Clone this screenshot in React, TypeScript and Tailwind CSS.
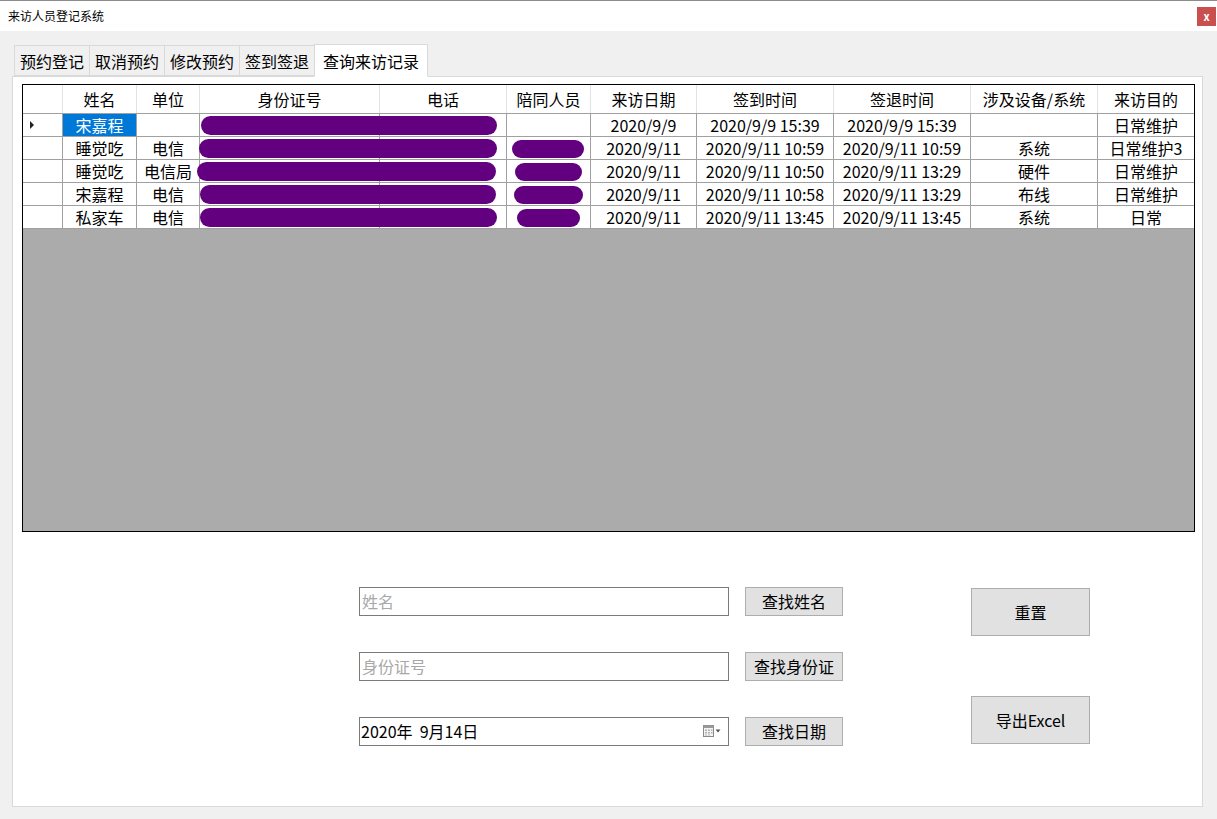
import React from 'react';

const FONT = { fontFamily: '"Microsoft YaHei", "Noto Sans CJK SC", "Noto Sans", sans-serif' };

const cols = [
  { key: 'hdr', label: '', w: 'w-[40px]' },
  { key: 'name', label: '姓名', w: 'w-[74px]' },
  { key: 'unit', label: '单位', w: 'w-[63px]' },
  { key: 'id', label: '身份证号', w: 'w-[180px]' },
  { key: 'phone', label: '电话', w: 'w-[127px]' },
  { key: 'comp', label: '陪同人员', w: 'w-[84px]' },
  { key: 'date', label: '来访日期', w: 'w-[106px]' },
  { key: 'in', label: '签到时间', w: 'w-[137px]' },
  { key: 'out', label: '签退时间', w: 'w-[137px]' },
  { key: 'dev', label: '涉及设备/系统', w: 'w-[127px]' },
  { key: 'goal', label: '来访目的', w: 'w-[96px]' },
];

interface Row {
  name: string;
  unit: string;
  date: string;
  checkIn: string;
  checkOut: string;
  dev: string;
  goal: string;
  idPill: [number, number];
  compPill?: [number, number];
}

const rows: Row[] = [
  { name: '宋嘉程', unit: '', date: '2020/9/9', checkIn: '2020/9/9 15:39', checkOut: '2020/9/9 15:39', dev: '', goal: '日常维护', idPill: [178, 296] },
  { name: '睡觉吃', unit: '电信', date: '2020/9/11', checkIn: '2020/9/11 10:59', checkOut: '2020/9/11 10:59', dev: '系统', goal: '日常维护3', idPill: [176, 298], compPill: [489, 72] },
  { name: '睡觉吃', unit: '电信局', date: '2020/9/11', checkIn: '2020/9/11 10:50', checkOut: '2020/9/11 13:29', dev: '硬件', goal: '日常维护', idPill: [174, 299], compPill: [492, 67] },
  { name: '宋嘉程', unit: '电信', date: '2020/9/11', checkIn: '2020/9/11 10:58', checkOut: '2020/9/11 13:29', dev: '布线', goal: '日常维护', idPill: [177, 296], compPill: [491, 69] },
  { name: '私家车', unit: '电信', date: '2020/9/11', checkIn: '2020/9/11 13:45', checkOut: '2020/9/11 13:45', dev: '系统', goal: '日常', idPill: [177, 297], compPill: [494, 63] },
];

const tabs = ['预约登记', '取消预约', '修改预约', '签到签退'];

const CalendarIcon = () => (
  <svg width="20" height="14" viewBox="0 0 20 14">
    <rect x="1.5" y="1.5" width="10" height="11" fill="#f4f4f4" stroke="#8a8a8a" />
    <rect x="1.5" y="1.5" width="10" height="2.5" fill="#9a9a9a" />
    <g fill="#b0b0b0">
      <rect x="3" y="5.5" width="2" height="1.5" />
      <rect x="6" y="5.5" width="2" height="1.5" />
      <rect x="9" y="5.5" width="1.5" height="1.5" />
      <rect x="3" y="8" width="2" height="1.5" />
      <rect x="6" y="8" width="2" height="1.5" />
      <rect x="9" y="8" width="1.5" height="1.5" />
      <rect x="3" y="10.5" width="2" height="1" />
      <rect x="6" y="10.5" width="2" height="1" />
    </g>
    <path d="M13.5 5.5 L18.5 5.5 L16 8.5 Z" fill="#555" />
  </svg>
);

export default function App() {
  return (
    <div className="w-[1217px] h-[819px] bg-[#f0f0f0] flex flex-col overflow-hidden text-black" style={FONT}>
      {/* title bar */}
      <div className="h-[31px] bg-white border-t border-[#8c8c8c] flex items-center justify-between pl-[8px] pr-[1px]">
        <span className="text-[12px] leading-none">来访人员登记系统</span>
        <div className="w-[19px] h-[19px] bg-[#c9504f] flex items-center justify-center text-white text-[11px] font-bold leading-none">x</div>
      </div>

      {/* tab strip */}
      <div className="flex items-end pl-[14px] mt-[12px] h-[33px]">
        {tabs.map(t => (
          <div key={t} className="h-[31px] px-[5px] border border-[#d9d9d9] border-r-0 bg-[#f0f0f0] text-[16px] flex items-center">
            {t}
          </div>
        ))}
        <div className="relative z-10 h-[33px] -mb-px px-[8px] border border-[#d9d9d9] border-b-white bg-white text-[16px] flex items-center">
          查询来访记录
        </div>
      </div>

      {/* tab page */}
      <div className="mx-[12px] w-[1191px] h-[731px] bg-white border border-[#d9d9d9] pt-[7px] pl-[9px]">
        {/* data grid */}
        <div className="w-[1173px] h-[448px] bg-[#ababab] border border-black flex flex-col text-[16px]">
          <div className="flex h-[29px] bg-white border-b border-[#a0a0a0]">
            {cols.map((c, i) => (
              <div
                key={c.key}
                className={`${c.w} shrink-0 flex items-center justify-center whitespace-nowrap ${i < cols.length - 1 ? 'border-r border-[#e3e3e3]' : ''}`}
              >
                {c.label}
              </div>
            ))}
          </div>
          {rows.map((r, ri) => {
            const cells = ['', r.name, r.unit, '', '', '', r.date, r.checkIn, r.checkOut, r.dev, r.goal];
            return (
              <div key={ri} className="relative flex h-[23px] bg-white border-b border-[#a0a0a0]">
                {cols.map((c, i) => {
                  const selected = ri === 0 && i === 1;
                  return (
                    <div
                      key={c.key}
                      className={`${c.w} shrink-0 flex items-center justify-center whitespace-nowrap leading-none pb-[1px] ${
                        i < cols.length - 1 ? 'border-r border-[#a0a0a0]' : ''
                      } ${selected ? 'bg-[#0078d7] text-white' : ''}`}
                    >
                      {i === 0 && ri === 0 ? (
                        <div className="w-0 h-0 border-y-[4px] border-y-transparent border-l-[4px] border-l-[#222] mr-[22px]" />
                      ) : (
                        cells[i]
                      )}
                    </div>
                  );
                })}
                <div
                  className="absolute top-[2px] h-[19px] rounded-full bg-[#620080]"
                  style={{ left: r.idPill[0], width: r.idPill[1] }}
                />
                {r.compPill && (
                  <div
                    className="absolute top-[3px] h-[18px] rounded-full bg-[#620080]"
                    style={{ left: r.compPill[0], width: r.compPill[1] }}
                  />
                )}
              </div>
            );
          })}
        </div>

        {/* search area */}
        <div className="flex mt-[55px] pl-[337px] text-[16px]">
          <div className="flex flex-col gap-[36px]">
            <div className="flex items-center gap-[16px]">
              <div className="w-[370px] h-[29px] border border-[#7a7a7a] flex items-center pl-[2px] pb-[2px] text-[#a8a8a8]">姓名</div>
              <button className="w-[98px] h-[29px] bg-[#e1e1e1] border border-[#adadad] flex items-center justify-center pb-[1px]">查找姓名</button>
            </div>
            <div className="flex items-center gap-[16px]">
              <div className="w-[370px] h-[29px] border border-[#7a7a7a] flex items-center pl-[2px] pb-[2px] text-[#a8a8a8]">身份证号</div>
              <button className="w-[98px] h-[29px] bg-[#e1e1e1] border border-[#adadad] flex items-center justify-center pb-[1px]">查找身份证</button>
            </div>
            <div className="flex items-center gap-[16px]">
              <div className="w-[370px] h-[29px] border border-[#7a7a7a] flex items-center justify-between pl-[1px] pr-[6px] pb-[1px]">
                <span className="whitespace-pre">2020年  9月14日</span>
                <CalendarIcon />
              </div>
              <button className="w-[98px] h-[29px] bg-[#e1e1e1] border border-[#adadad] flex items-center justify-center pb-[1px]">查找日期</button>
            </div>
          </div>
          <div className="flex flex-col gap-[60px] ml-[128px] pt-[1px]">
            <button className="w-[119px] h-[48px] bg-[#e1e1e1] border border-[#adadad] flex items-center justify-center">重置</button>
            <button className="w-[119px] h-[48px] bg-[#e1e1e1] border border-[#adadad] flex items-center justify-center">导出Excel</button>
          </div>
        </div>
      </div>
    </div>
  );
}
